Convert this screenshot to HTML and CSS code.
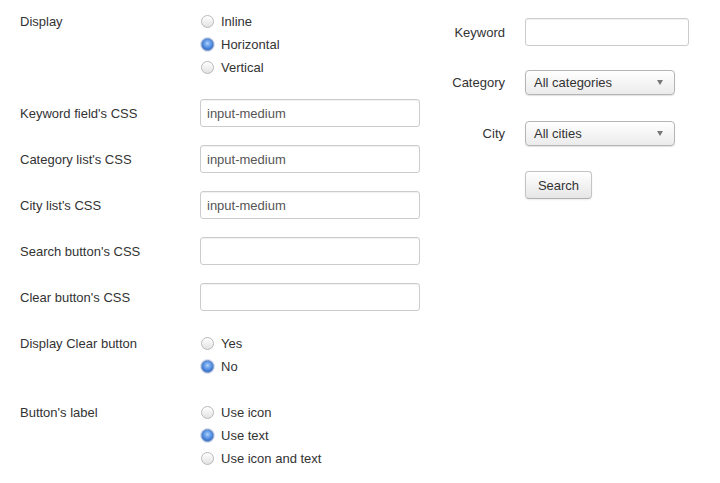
FILE: index.html
```html
<!DOCTYPE html>
<html>
<head>
<meta charset="utf-8">
<link rel="stylesheet" href="styles.css">
</head>
<body>
<div class="page">
  <form class="settings">
    <div class="row row-radio first">
      <div class="label">Display</div>
      <div class="radios">
        <label class="opt"><input type="radio" name="display"><span>Inline</span></label>
        <label class="opt"><input type="radio" name="display" checked><span>Horizontal</span></label>
        <label class="opt"><input type="radio" name="display"><span>Vertical</span></label>
      </div>
    </div>
    <div class="row row-input r2">
      <div class="label">Keyword field's CSS</div>
      <input class="text" type="text" value="input-medium">
    </div>
    <div class="row row-input">
      <div class="label">Category list's CSS</div>
      <input class="text" type="text" value="input-medium">
    </div>
    <div class="row row-input">
      <div class="label">City list's CSS</div>
      <input class="text" type="text" value="input-medium">
    </div>
    <div class="row row-input">
      <div class="label">Search button's CSS</div>
      <input class="text" type="text" value="">
    </div>
    <div class="row row-input">
      <div class="label">Clear button's CSS</div>
      <input class="text" type="text" value="">
    </div>
    <div class="row row-radio r7">
      <div class="label">Display Clear button</div>
      <div class="radios">
        <label class="opt"><input type="radio" name="clear"><span>Yes</span></label>
        <label class="opt"><input type="radio" name="clear" checked><span>No</span></label>
      </div>
    </div>
    <div class="row row-radio r8">
      <div class="label">Button's label</div>
      <div class="radios">
        <label class="opt"><input type="radio" name="blabel"><span>Use icon</span></label>
        <label class="opt"><input type="radio" name="blabel" checked><span>Use text</span></label>
        <label class="opt"><input type="radio" name="blabel"><span>Use icon and text</span></label>
      </div>
    </div>
  </form>

  <form class="preview">
    <div class="prow p1">
      <div class="plabel">Keyword</div>
      <input class="text kw" type="text" value="">
    </div>
    <div class="prow p2">
      <div class="plabel">Category</div>
      <div class="select"><span>All categories</span><i class="caret"></i></div>
    </div>
    <div class="prow p3">
      <div class="plabel">City</div>
      <div class="select"><span>All cities</span><i class="caret"></i></div>
    </div>
    <div class="prow p4">
      <div class="plabel"></div>
      <button type="button" class="btn">Search</button>
    </div>
  </form>
</div>
</body>
</html>
```

FILE: styles.css
```css
html, body {
  margin: 0;
  padding: 0;
  background: #ffffff;
}
body {
  font-family: "Liberation Sans", Arial, sans-serif;
  font-size: 13px;
  color: #333333;
}
.page {
  display: flex;
  align-items: flex-start;
  padding-left: 20px;
}
.settings {
  width: 400px;
  display: flex;
  flex-direction: column;
  padding-top: 10px;
}
.row {
  display: flex;
}
.label {
  width: 180px;
  flex: none;
}
.row-radio .label {
  line-height: 23px;
}
.row-input {
  align-items: center;
  margin-top: 18px;
}
.row-input.r2 { margin-top: 20px; }
.row-radio.r7 { margin-top: 21px; }
.row-radio.r8 { margin-top: 23px; }

.radios {
  display: flex;
  flex-direction: column;
}
.opt {
  display: flex;
  align-items: center;
  height: 23px;
  line-height: 23px;
}
.opt input {
  -webkit-appearance: none;
  appearance: none;
  width: 13px;
  height: 13px;
  margin: 0 7px 0 1px;
  border-radius: 50%;
  border: 1px solid #b8b8b8;
  background: linear-gradient(#ffffff, #e2e2e2);
  box-shadow: inset 0 1px 1px rgba(255,255,255,0.9);
  box-sizing: border-box;
}
.opt input:checked {
  border-color: #6d8fc4;
  background: radial-gradient(circle at 50% 40%, #b4d4fb 0, #7fb0f0 2px, #4f8ae0 4.5px, #3f74c8 6px);
  box-shadow: 0 0 0 1px #d3deef;
}

.text {
  width: 220px;
  height: 28px;
  box-sizing: border-box;
  border: 1px solid #cccccc;
  border-radius: 3px;
  box-shadow: inset 0 1px 1px rgba(0,0,0,0.06);
  padding: 0 6px;
  font-family: "Liberation Sans", Arial, sans-serif;
  font-size: 13px;
  color: #555555;
  background: #ffffff;
  outline: none;
}

.preview {
  margin-left: 20px;
  padding-top: 18px;
  display: flex;
  flex-direction: column;
}
.prow {
  display: flex;
  align-items: center;
}
.plabel {
  width: 65px;
  text-align: right;
  margin-right: 20px;
  flex: none;
}
.p2 { margin-top: 24px; }
.p3 { margin-top: 26px; }
.p4 { margin-top: 25px; }
.text.kw {
  width: 164px;
}
.select {
  width: 150px;
  height: 25px;
  box-sizing: border-box;
  border: 1px solid #b5b5b5;
  border-radius: 4px;
  background: linear-gradient(#ffffff, #ebebeb);
  box-shadow: 0 1px 1px rgba(0,0,0,0.12);
  display: flex;
  align-items: center;
  justify-content: space-between;
  padding: 0 11px 0 8px;
  color: #333333;
}
.caret {
  width: 0;
  height: 0;
  border-left: 3.5px solid transparent;
  border-right: 3.5px solid transparent;
  border-top: 5px solid #777777;
  margin-top: -1px;
}
.btn {
  width: 67px;
  height: 28px;
  box-sizing: border-box;
  border: 1px solid #c4c4c4;
  border-bottom-color: #b0b0b0;
  border-radius: 4px;
  background: linear-gradient(#ffffff, #e6e6e6);
  box-shadow: inset 0 1px 0 rgba(255,255,255,0.3), 0 1px 2px rgba(0,0,0,0.08);
  font-family: "Liberation Sans", Arial, sans-serif;
  font-size: 13px;
  color: #333333;
  padding: 0;
}
```
